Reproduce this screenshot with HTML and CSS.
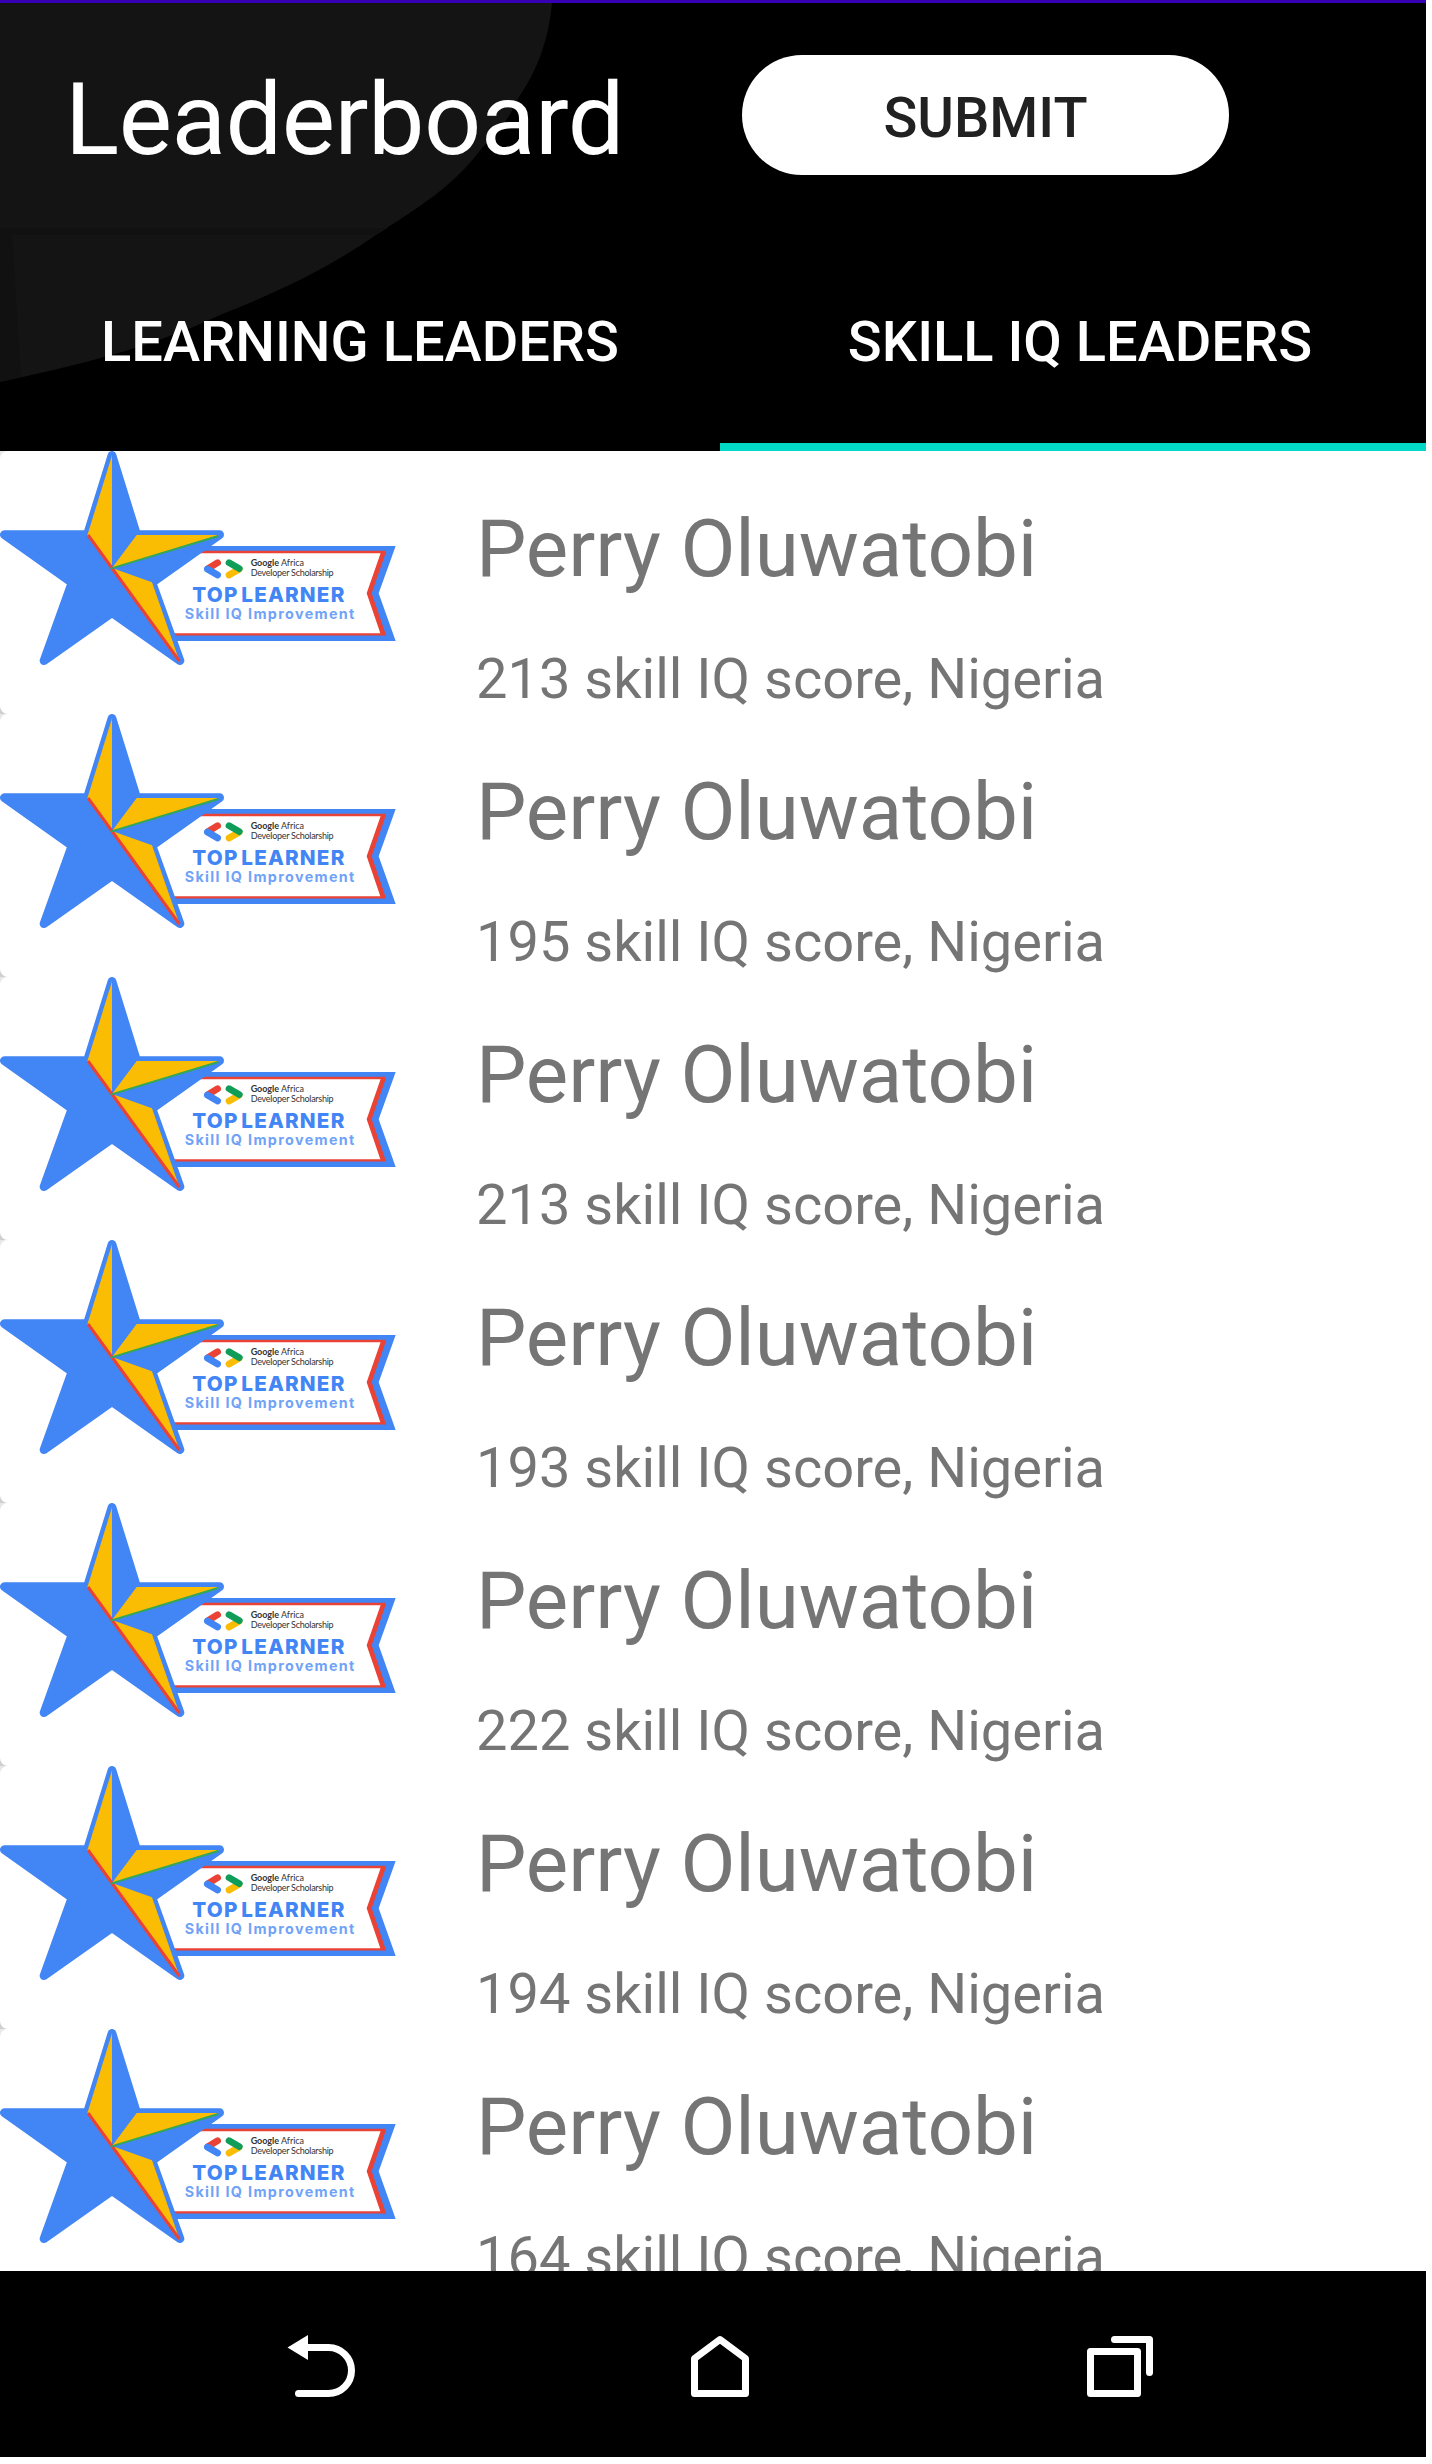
FILE: index.html
```html
<!DOCTYPE html>
<html lang="en">
<head>
<meta charset="utf-8">
<title>Leaderboard</title>
<link rel="stylesheet" href="styles.css">
</head>
<body>
<svg class="defs" width="0" height="0" aria-hidden="true">
  <symbol id="badge" viewBox="0 0 1230 789">
    <g transform="translate(0 -33)">
      <path fill="#4285f4" d="M520 318H1187L1136 460L1187 603H520L450 440Z"/>
      <path fill="#fff" stroke="#ea4335" stroke-width="7" d="M520 336H1151L1106 460L1151 583H520L440 440Z"/>
      <path fill="#ea4335" d="M1143 336H1158L1115 460L1158 586H1143L1100 460Z"/>
      <path fill="#4285f4" stroke="#4285f4" stroke-width="26" stroke-linejoin="round" d="M336 46L410 284H659L456 428L540 662L336 518L132 662L216 428L13 284H262Z"/>
      <path fill="#fbbc04" d="M336 46V384L262 286Z"/>
      <path fill="#fbbc04" d="M410 285H657L336 384Z"/>
      <path fill="#fbbc04" d="M336 384L456 427L538 662Z"/>
      <path fill="none" stroke="#ea4335" stroke-width="9" d="M264 285L538 663"/>
      <path fill="none" stroke="#34a853" stroke-width="6" d="M332 386L655 288"/>
      <path fill="#fff" d="M474 433L500 500L526 579H560V390H535Z"/>
      <g fill="none" stroke-width="20" stroke-linecap="round">
        <path stroke="#ea4335" d="M624 386L653 368"/>
        <path stroke="#4285f4" d="M622 387L653 405"/>
        <path stroke="#fbbc04" d="M687 405L717 388"/>
        <path stroke="#0f9d58" d="M687 368L718 386"/>
      </g>
    </g>
  </symbol>
</svg>
<div class="screen">
  <header class="header">
    <svg class="backdrop" viewBox="0 0 560 448" aria-hidden="true">
      <path fill="#141414" d="M0 0H552C549 35 538 66 519 94C509 116 498 129 482 145C453 184 419 204 376 232C329 265 276 290 220 312C150 345 79 362 0 379Z"/>
      <path fill="#111" d="M0 225H388L376 232H12L21 374L0 379Z"/>
    </svg>
    <div class="titlebar">
      <h1 class="title"><span>Leaderboard</span></h1>
      <button class="submit"><span>SUBMIT</span></button>
    </div>
    <nav class="tabs">
      <a class="tab">LEARNING LEADERS</a>
      <a class="tab active">SKILL IQ LEADERS</a>
    </nav>
  </header>
  <main class="list">
    <article class="row"><div class="card"><svg class="badge" viewBox="0 33 1230 789"><use href="#badge" y="33" width="1230" height="789"/><text class="org" x="752" y="378" textLength="160"><tspan class="b">Google</tspan> Africa</text><text class="org" x="752" y="409" textLength="249">Developer Scholarship</text><text class="top" x="577" y="487" textLength="456">TOP LEARNER</text><text class="sub" x="554" y="536" textLength="509">Skill IQ Improvement</text></svg><div class="info"><h2 class="name">Perry Oluwatobi</h2><p class="score">213 skill IQ score, Nigeria</p></div></div></article>
    <article class="row"><div class="card"><svg class="badge" viewBox="0 33 1230 789"><use href="#badge" y="33" width="1230" height="789"/><text class="org" x="752" y="378" textLength="160"><tspan class="b">Google</tspan> Africa</text><text class="org" x="752" y="409" textLength="249">Developer Scholarship</text><text class="top" x="577" y="487" textLength="456">TOP LEARNER</text><text class="sub" x="554" y="536" textLength="509">Skill IQ Improvement</text></svg><div class="info"><h2 class="name">Perry Oluwatobi</h2><p class="score">195 skill IQ score, Nigeria</p></div></div></article>
    <article class="row"><div class="card"><svg class="badge" viewBox="0 33 1230 789"><use href="#badge" y="33" width="1230" height="789"/><text class="org" x="752" y="378" textLength="160"><tspan class="b">Google</tspan> Africa</text><text class="org" x="752" y="409" textLength="249">Developer Scholarship</text><text class="top" x="577" y="487" textLength="456">TOP LEARNER</text><text class="sub" x="554" y="536" textLength="509">Skill IQ Improvement</text></svg><div class="info"><h2 class="name">Perry Oluwatobi</h2><p class="score">213 skill IQ score, Nigeria</p></div></div></article>
    <article class="row"><div class="card"><svg class="badge" viewBox="0 33 1230 789"><use href="#badge" y="33" width="1230" height="789"/><text class="org" x="752" y="378" textLength="160"><tspan class="b">Google</tspan> Africa</text><text class="org" x="752" y="409" textLength="249">Developer Scholarship</text><text class="top" x="577" y="487" textLength="456">TOP LEARNER</text><text class="sub" x="554" y="536" textLength="509">Skill IQ Improvement</text></svg><div class="info"><h2 class="name">Perry Oluwatobi</h2><p class="score">193 skill IQ score, Nigeria</p></div></div></article>
    <article class="row"><div class="card"><svg class="badge" viewBox="0 33 1230 789"><use href="#badge" y="33" width="1230" height="789"/><text class="org" x="752" y="378" textLength="160"><tspan class="b">Google</tspan> Africa</text><text class="org" x="752" y="409" textLength="249">Developer Scholarship</text><text class="top" x="577" y="487" textLength="456">TOP LEARNER</text><text class="sub" x="554" y="536" textLength="509">Skill IQ Improvement</text></svg><div class="info"><h2 class="name">Perry Oluwatobi</h2><p class="score">222 skill IQ score, Nigeria</p></div></div></article>
    <article class="row"><div class="card"><svg class="badge" viewBox="0 33 1230 789"><use href="#badge" y="33" width="1230" height="789"/><text class="org" x="752" y="378" textLength="160"><tspan class="b">Google</tspan> Africa</text><text class="org" x="752" y="409" textLength="249">Developer Scholarship</text><text class="top" x="577" y="487" textLength="456">TOP LEARNER</text><text class="sub" x="554" y="536" textLength="509">Skill IQ Improvement</text></svg><div class="info"><h2 class="name">Perry Oluwatobi</h2><p class="score">194 skill IQ score, Nigeria</p></div></div></article>
    <article class="row"><div class="card"><svg class="badge" viewBox="0 33 1230 789"><use href="#badge" y="33" width="1230" height="789"/><text class="org" x="752" y="378" textLength="160"><tspan class="b">Google</tspan> Africa</text><text class="org" x="752" y="409" textLength="249">Developer Scholarship</text><text class="top" x="577" y="487" textLength="456">TOP LEARNER</text><text class="sub" x="554" y="536" textLength="509">Skill IQ Improvement</text></svg><div class="info"><h2 class="name">Perry Oluwatobi</h2><p class="score">164 skill IQ score, Nigeria</p></div></div></article>
  </main>
  <footer class="navbar">
    <svg class="icon" viewBox="280 2330 80 72"><path fill="#fff" d="M287.500 2347.500L308 2335V2360Z"/><path d="M306 2347.500H328.500A23 23 0 0 1 328.500 2393.500H298.500"/></svg>
    <svg class="icon" viewBox="680 2330 80 72"><path d="M694.500 2358.500L720 2339.500L745.500 2358.500V2393.500H694.500Z"/></svg>
    <svg class="icon" viewBox="1080 2330 80 72"><path d="M1090.500 2351.500H1137.500V2393.500H1090.500ZM1114.500 2339.500H1149.500V2372.500"/></svg>
  </footer>
</div>
</body>
</html>
```
FILE: styles.css
```css
* { box-sizing: border-box; }
body { margin: 0; background: #fff; font-family: Roboto, sans-serif; }
.defs { position: absolute; }
.screen { width: 1426px; height: 2457px; display: flex; flex-direction: column; overflow: hidden; }
.header { position: relative; height: 451px; flex: none; background: #000; border-top: 3px solid #3700b3; color: #fff; }
.backdrop { position: absolute; left: 0; top: 0; width: 560px; height: 448px; }
.titlebar { position: relative; height: 232px; display: flex; align-items: flex-start; padding-left: 65px; }
.title { margin: 0; width: 677px; padding-top: 58px; font-size: 100.5px; letter-spacing: -0.5px; line-height: 118px; font-weight: 400; white-space: nowrap; }
.submit { width: 487px; height: 120px; margin-top: 52px; border: 0; border-radius: 60px; background: #fff; color: #212121; font: 500 56px/66px Roboto, sans-serif; padding: 6px 0 0; }
.tabs { position: relative; height: 216px; display: flex; }
.tab { width: 720px; height: 216px; padding-top: 74px; text-align: center; font-size: 56px; line-height: 66px; font-weight: 500; white-space: nowrap; }
.tab.active { width: 706px; padding-left: 14px; border-bottom: 8px solid #03dac6; }
.list { height: 1820px; flex: none; overflow: hidden; }
.row { height: 263px; background: linear-gradient(#e8e8e8 50%, #cfcfcf 50%); }
.card { height: 263px; display: flex; background: #fff; border-radius: 8px 0 0 8px; }
.badge { width: 410px; height: 263px; flex: none; }
.org { font-family: Lato, sans-serif; font-size: 27px; fill: #333; }
.b { font-weight: 700; }
.top { font-family: Inter, sans-serif; font-size: 62px; font-weight: 800; word-spacing: -9px; fill: #4285f4; }
.sub { font-family: Inter, sans-serif; font-size: 43px; font-weight: 700; fill: #70a3f7; }
.info { padding-left: 66px; color: #757575; white-space: nowrap; }
.name { margin: 0; padding-top: 51px; font-size: 80px; letter-spacing: -0.1px; line-height: 94px; font-weight: 400; }
.score { margin: 0; padding-top: 50px; font-size: 56px; line-height: 66px; }
.navbar { height: 186px; flex: none; display: flex; gap: 320px; padding: 59px 0 0 280px; background: #000; }
.icon { width: 80px; height: 72px; fill: none; stroke: #fff; stroke-width: 7px; stroke-linecap: round; stroke-linejoin: round; }
.icon path[fill] { stroke: none; }
```
